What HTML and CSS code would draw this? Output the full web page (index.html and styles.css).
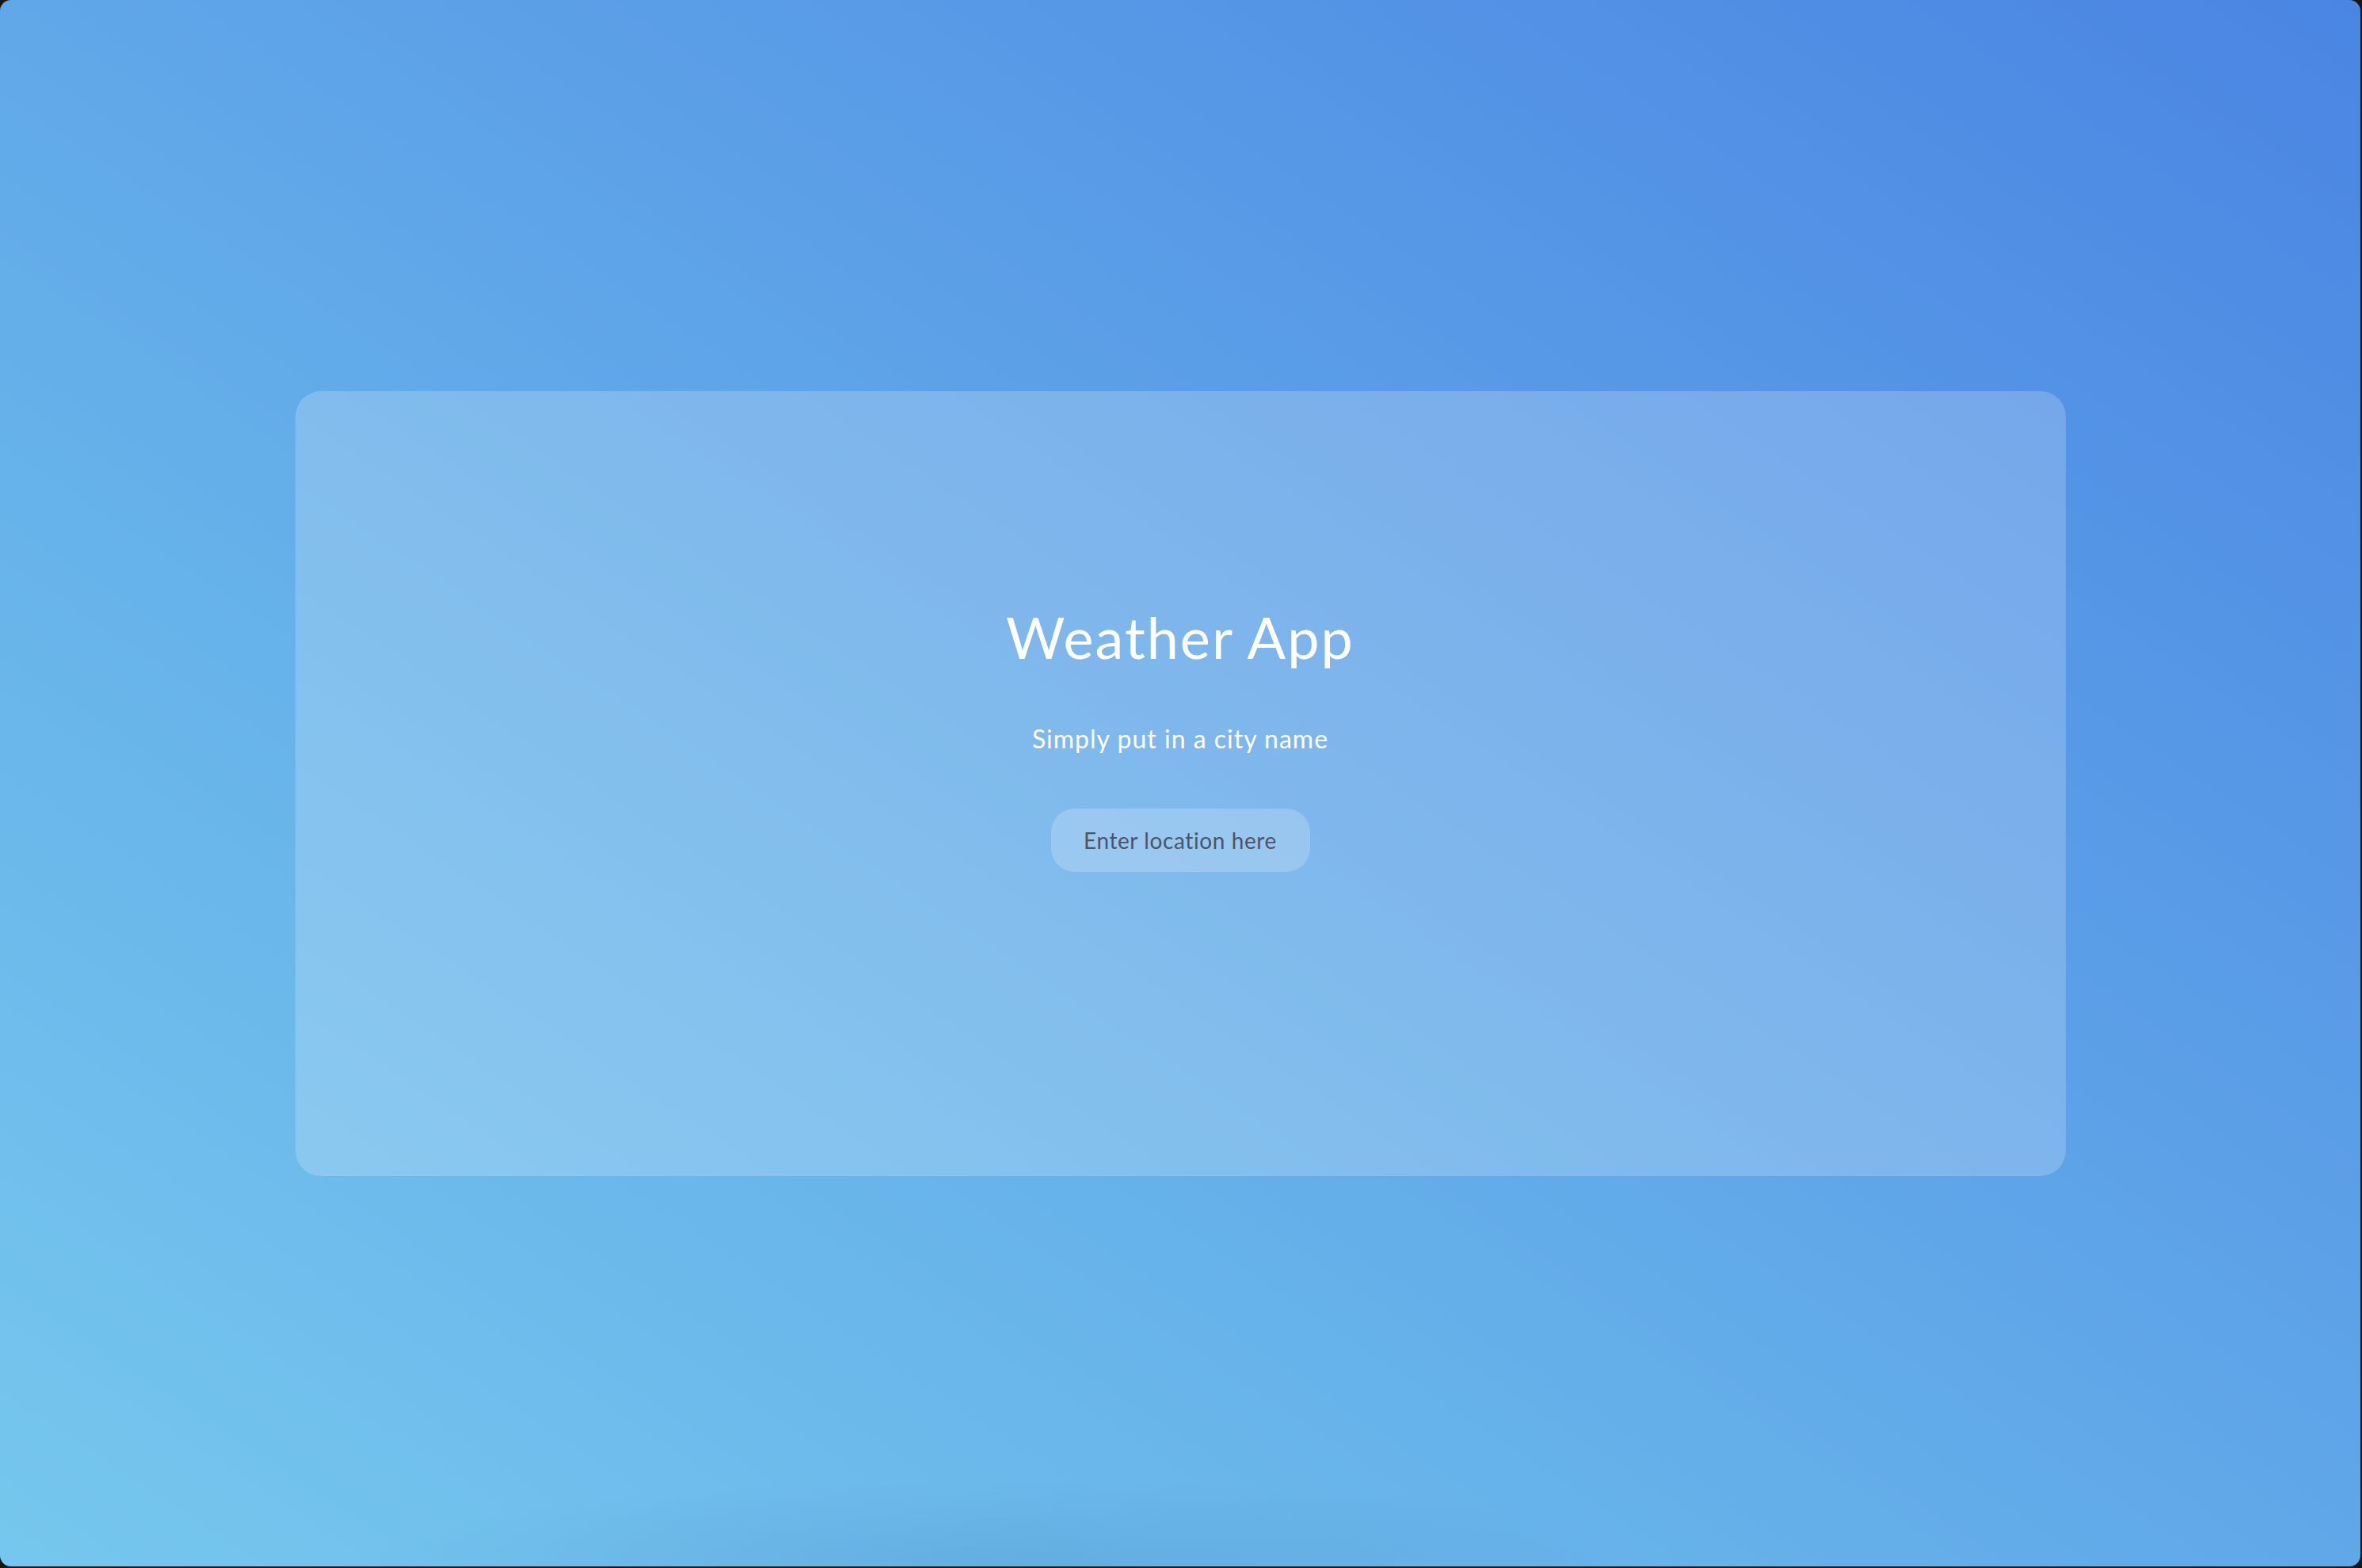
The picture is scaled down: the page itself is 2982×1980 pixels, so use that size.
FILE: index.html
```html
<!DOCTYPE html>
<html lang="en">
<head>
<meta charset="utf-8">
<title>Weather App</title>
<link rel="stylesheet" href="styles.css">
</head>
<body>
<div class="window">
  <main class="card">
    <h1 class="title">Weather App</h1>
    <p class="subtitle">Simply put in a city name</p>
    <input class="location" type="text" placeholder="Enter location here">
  </main>
</div>
</body>
</html>
```

FILE: styles.css
```css
html, body {
  margin: 0;
  padding: 0;
  background: #161616;
}

body {
  width: 2982px;
  height: 1980px;
  overflow: hidden;
  font-family: "Lato", "Open Sans", sans-serif;
}

.window {
  width: 2980px;
  height: 1978px;
  border-radius: 14px;
  overflow: hidden;
  display: flex;
  align-items: center;
  justify-content: center;
  background:
    radial-gradient(ellipse 820px 110px at 1265px 100%, rgba(40, 90, 150, 0.13), rgba(40, 90, 150, 0) 100%),
    linear-gradient(to top right, #76c7ee 0%, #66b2ea 35%, #5a9de7 65%, #4a85e3 100%);
}

.card {
  width: 2235px;
  height: 991px;
  box-sizing: border-box;
  padding-bottom: 116px;
  border-radius: 32px;
  background: rgba(255, 255, 255, 0.2);
  display: flex;
  flex-direction: column;
  align-items: center;
  justify-content: center;
}

.title {
  margin: 0;
  font-size: 72px;
  line-height: 1.2;
  font-weight: 400;
  color: #ffffff;
  letter-spacing: 2px;
}

.subtitle {
  margin: 67px 0 0;
  font-size: 32px;
  line-height: 1.2;
  color: #ffffff;
  letter-spacing: 1px;
}

.location {
  margin-top: 69px;
  width: 327px;
  height: 80px;
  box-sizing: border-box;
  border: none;
  outline: none;
  border-radius: 30px;
  background: rgba(255, 255, 255, 0.2);
  text-align: center;
  font-family: "Lato", "Open Sans", sans-serif;
  font-size: 28px;
  letter-spacing: 0.6px;
  color: #4a5568;
  padding: 0 20px;
}

.location::placeholder {
  color: #4a5568;
  opacity: 1;
}
```
